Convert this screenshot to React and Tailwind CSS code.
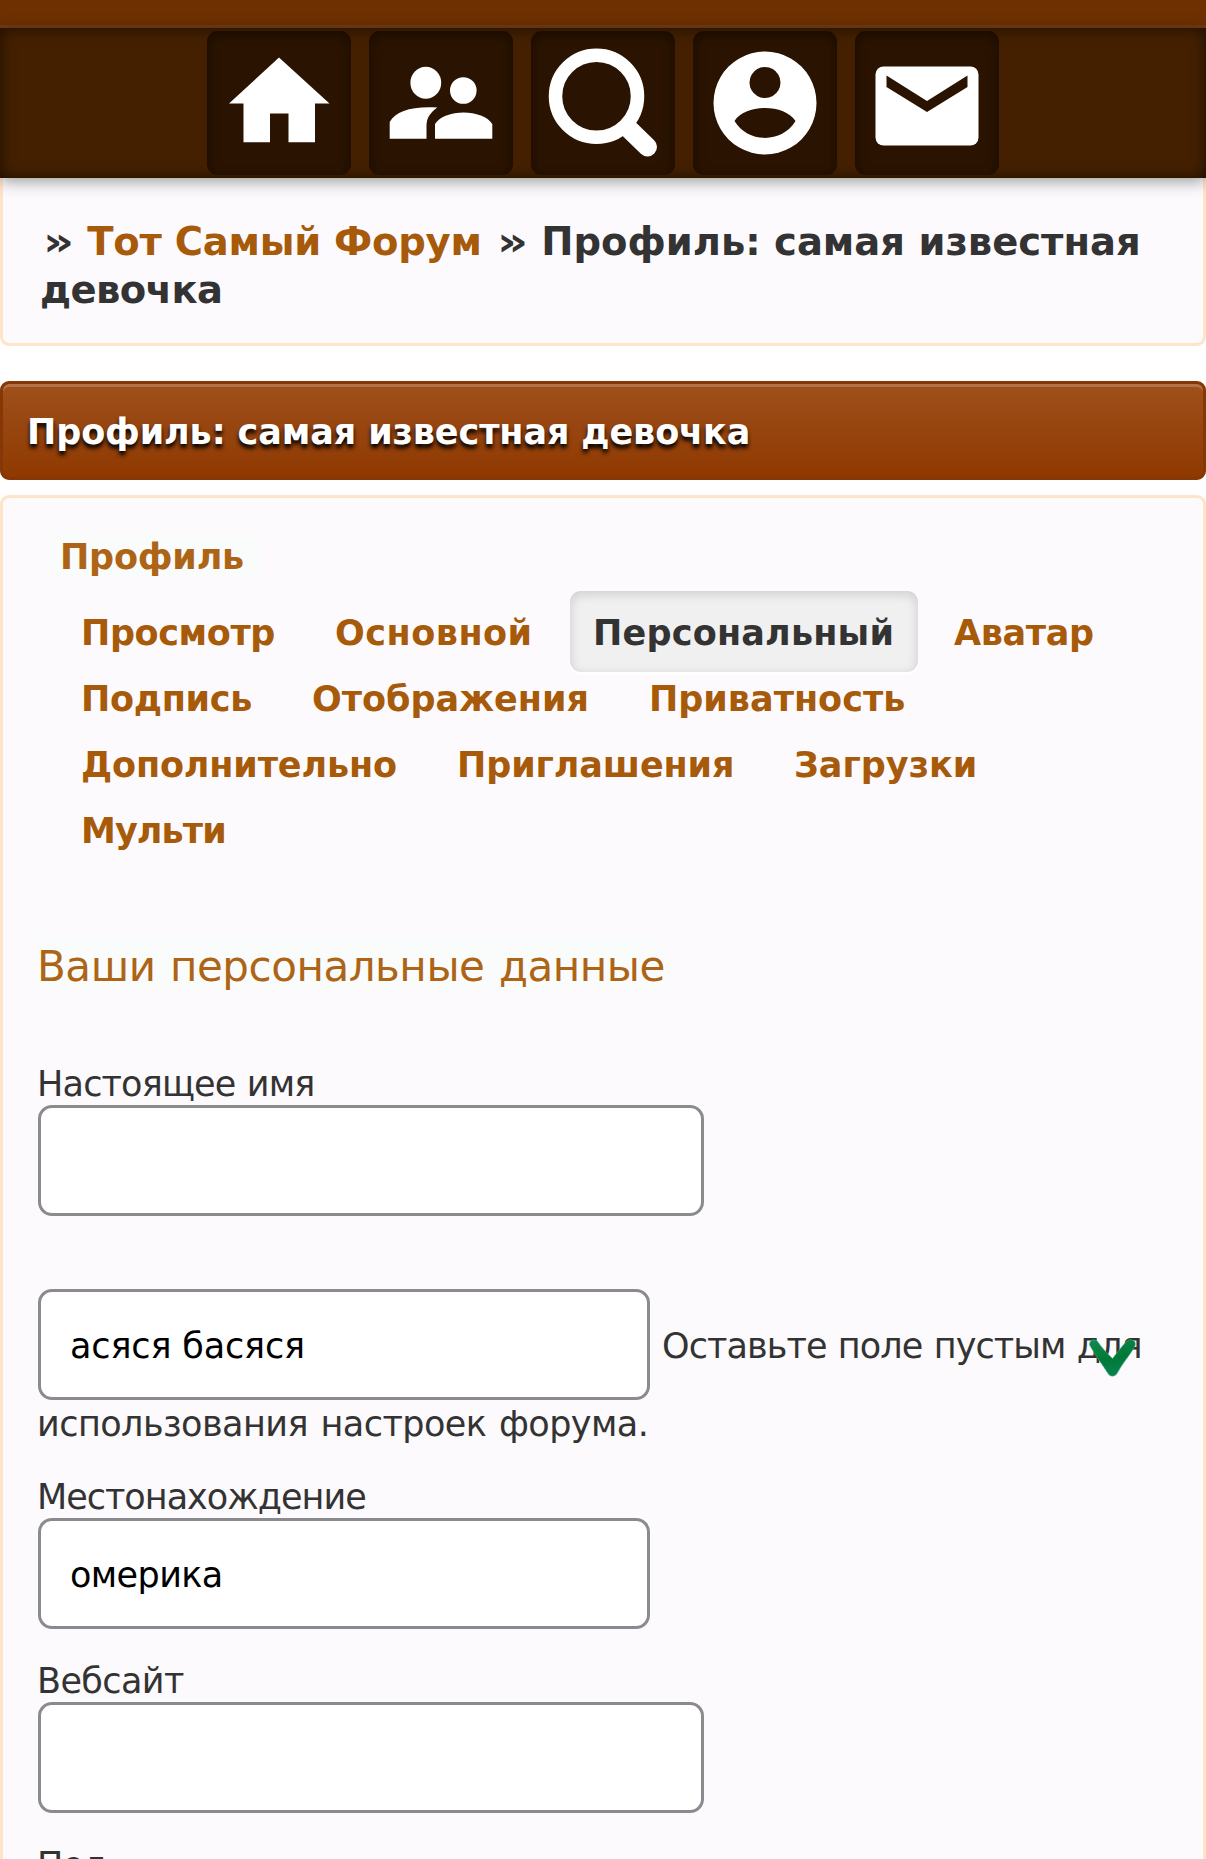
import React from 'react';

const navItems = [
  {
    id: 'home',
    icon: <path d="M72 26.500 L122.500 72.500 H108 V111.300 H81.500 V82.500 H63 V111.300 H36.500 V72.500 H22 Z" />
  },
  {
    id: 'users',
    icon: (
      <>
        <ellipse cx="56.800" cy="51.700" rx="15.400" ry="16" />
        <circle cx="94.300" cy="59.500" r="13.300" />
        <path d="M20.700 107.700 V91 C27 80 43 75 68.300 76.500 C61 82 57.500 87 57.500 95 V107.700 Z" />
        <path d="M66 107.700 V93 C75 77.500 114 77.500 123.300 93 V107.700 Z" />
      </>
    )
  },
  {
    id: 'search',
    icon: (
      <>
        <circle cx="65.500" cy="65.300" r="41" fill="none" stroke="white" strokeWidth="13.500" />
        <path d="M99 99 L116.500 116" stroke="white" strokeWidth="19" strokeLinecap="round" />
      </>
    )
  },
  {
    id: 'profile',
    icon: (
      <path
        fillRule="evenodd"
        d="M72 20.500 a51.500 51.500 0 1 0 .01 0 Z M72 36 a15.500 15.500 0 1 1 -.01 0 Z M41.500 90 C52 72.500 92 72.500 102.500 90 C89 112.500 55 112.500 41.500 90 Z"
      />
    )
  },
  {
    id: 'mail',
    icon: (
      <>
        <rect x="20.500" y="35.500" width="103" height="79" rx="8" />
        <path d="M31.500 44.500 L72 70 L112.500 44.500 V56 L72 81 L31.500 56 Z" fill="#2a1300" />
      </>
    )
  }
];

const tabRows = [
  [
    { label: 'Просмотр', className: 'w-[254px] tracking-[-0.4px]' },
    { label: 'Основной', className: 'w-[235px] tracking-[0.5px]' },
    { label: 'Персональный', active: true },
    { label: 'Аватар', className: 'ml-[36px] tracking-[-0.35px]' }
  ],
  [
    { label: 'Подпись', className: 'w-[231px] tracking-[-0.3px]' },
    { label: 'Отображения', className: 'w-[337px]' },
    { label: 'Приватность', className: '' }
  ],
  [
    { label: 'Дополнительно', className: 'w-[376px] tracking-[-0.15px]' },
    { label: 'Приглашения', className: 'w-[337px] tracking-[-0.1px]' },
    { label: 'Загрузки', className: '' }
  ],
  [{ label: 'Мульти', className: 'tracking-[-0.9px]' }]
];

const TabItem = ({ label, active, className }) => {
  if (active) {
    return (
      <li className="flex h-[81px] w-[348px] items-center rounded-[11px] bg-[#f0f0f0] pl-[23px] pt-[4px] tracking-[0.2px] text-[#333333] shadow-[inset_0_3px_12px_rgba(0,0,0,0.15),0_3px_0_#ffffff]">
        {label}
      </li>
    );
  }
  return <li className={`pt-[4px] ${className}`}>{label}</li>;
};

const Separator = () => (
  <span className="ml-[2px] mr-[6px] inline-block origin-left scale-x-125">»</span>
);

const TextField = ({ value = '', className = '' }) => (
  <input
    type="text"
    defaultValue={value}
    className={`h-[111px] shrink-0 rounded-[14px] border-3 border-[#8b8a8f] bg-white pl-[29px] pt-[2px] text-[35px] text-black outline-none ${className}`}
  />
);

const CheckMark = () => (
  <svg className="absolute left-[1088px] top-[1338px] h-[40px] w-[50px]" viewBox="0 0 50 40">
    <defs>
      <linearGradient id="check" x1="0" y1="0" x2="0.3" y2="1">
        <stop offset="0" stopColor="#118a4c" />
        <stop offset="0.6" stopColor="#007838" />
        <stop offset="1" stopColor="#08824c" />
      </linearGradient>
    </defs>
    <path
      d="M1.500 7 C1 2 7 0 10 4 C14 10 19 15 24.500 20.500 C29 15 33 9 38.500 3.500 C42 0 49 2 47 8 C42 17 34 26 29 35.500 C27 39 22 39 20 35.500 C14 26 7 17 1.500 7 Z"
      fill="url(#check)"
      stroke="#4dbb9a"
      strokeOpacity="0.5"
      strokeWidth="1"
    />
  </svg>
);

const App = () => {
  return (
    <div className="relative h-[1859px] w-[1206px] overflow-hidden bg-white font-['DejaVu_Sans',sans-serif] text-[35px] text-[#333333]">
      {/* Top navigation */}
      <header className="relative z-10">
        <div className="h-[28px] border-b-3 border-[#733c14] bg-[#6e3000]" />
        <nav className="flex h-[150px] justify-center gap-[18px] bg-[#442000] pt-[3px] shadow-[inset_0_0_15px_rgba(0,0,0,0.6),0_3px_15px_rgba(0,0,0,0.4)]">
          {navItems.map((item) => (
            <a
              key={item.id}
              className="h-36 w-36 rounded-[11px] bg-[#2a1300] shadow-[inset_0_3px_12px_rgba(0,0,0,0.45)]"
            >
              <svg className="h-full w-full" viewBox="0 0 144 144" fill="white">
                {item.icon}
              </svg>
            </a>
          ))}
        </nav>
      </header>

      {/* Breadcrumbs */}
      <div className="h-[168px] rounded-b-[9px] border-3 border-t-0 border-[#ffe4c8] bg-[#fcfafc] pl-[38px] pt-[40px] text-[38.5px] font-bold leading-[48px] whitespace-nowrap">
        <p>
          <Separator /> <a className="tracking-[-0.25px] text-[#a65a0a]">Тот Самый Форум</a> <Separator /> Профиль: самая известная
        </p>
        <p className="-ml-px tracking-[-0.6px]">девочка</p>
      </div>

      {/* Page title */}
      <h1 className="mt-[35px] h-[99px] rounded-[9px] border-3 border-[#853805] bg-linear-to-b from-[#9f501b] to-[#8f3900] pl-[24px] text-[35px] font-bold leading-[97px] tracking-[-0.11px] whitespace-nowrap text-white shadow-[inset_0_3px_0_rgba(255,255,255,0.2)] [text-shadow:0_4px_4px_#000]">
        Профиль: самая известная девочка
      </h1>

      {/* Profile panel */}
      <main className="mt-[15px] h-[1500px] rounded-t-[9px] border-3 border-[#ffe4c8] bg-[#fcfafc] px-[35px]">
        <h2 className="ml-[8px] mt-[35px] h-[45px] w-[214px] bg-[#fafcfb] pl-[14px] font-bold leading-[49px] tracking-[-0.2px] text-[#ad6417]">
          Профиль
        </h2>

        <nav className="mt-[20px] pl-[43px] font-bold text-[#a65a0a]">
          {tabRows.map((row, index) => (
            <ul key={index} className="flex h-[66px] items-center whitespace-nowrap">
              {row.map((tab) => (
                <TabItem key={tab.label} {...tab} />
              ))}
            </ul>
          ))}
        </nav>

        <h3 className="mt-[75px] h-[53px] w-[627px] bg-[#fafcfb] text-[42px] leading-[60px] tracking-[-0.45px] whitespace-nowrap text-[#ad6417] [word-spacing:1.500px]">
          <span className="-ml-px">Ваши персональные данные</span>
        </h3>

        <form className="leading-[42px] whitespace-nowrap">
          <div className="mt-[73px] h-[226px]">
            <label className="-ml-px block tracking-[-0.82px] [word-spacing:1px]">Настоящее имя</label>
            <TextField className="w-[666px]" />
          </div>
          <div className="h-[187px]">
            <div className="flex items-center gap-[12px]">
              <TextField value="асяся басяся" className="w-[612px] tracking-[-0.15px]" />
              <span className="pt-[2px] tracking-[-0.9px] [word-spacing:1px]">Оставьте поле пустым для</span>
            </div>
            <p className="-ml-px pt-[3px] tracking-[-0.55px] [word-spacing:2px]">использования настроек форума.</p>
          </div>
          <div className="h-[184px]">
            <label className="-ml-px block tracking-[-1px]">Местонахождение</label>
            <TextField value="омерика" className="w-[612px] tracking-[-0.6px]" />
          </div>
          <div className="h-[184px]">
            <label className="-ml-px block tracking-[-0.6px]">Вебсайт</label>
            <TextField className="w-[666px]" />
          </div>
          <label className="-ml-px block tracking-[-0.6px]">Пол</label>
        </form>
      </main>

      <CheckMark />
    </div>
  );
};

export default App;
